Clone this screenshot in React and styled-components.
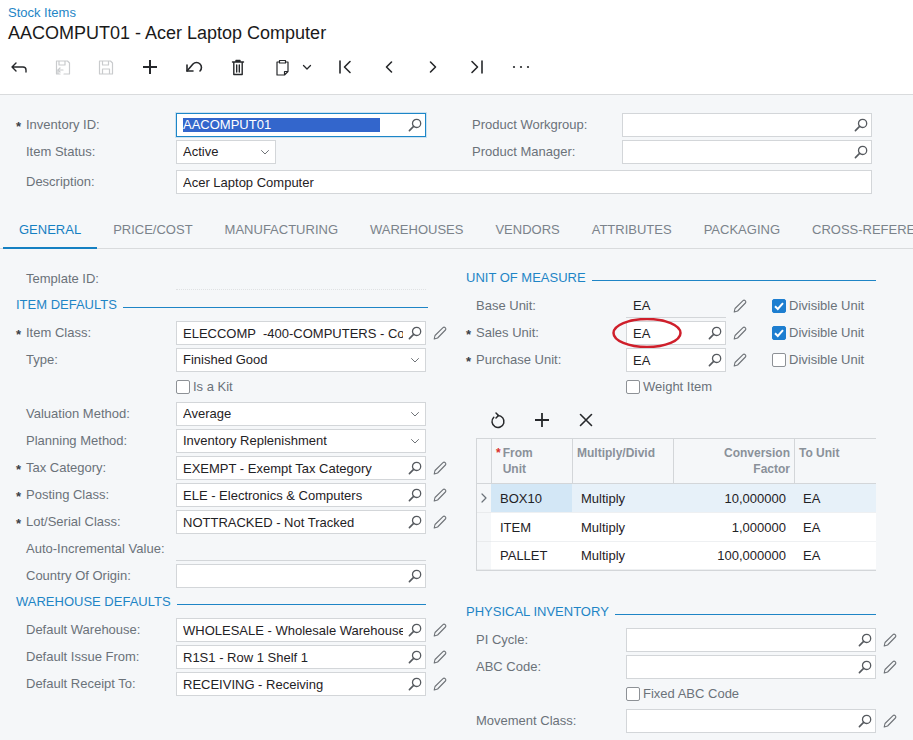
import styled, { createGlobalStyle } from "styled-components";

const GlobalStyle = createGlobalStyle`
  html, body {
    margin: 0;
    padding: 0;
    background: #f5f7f9;
  }
  * {
    box-sizing: border-box;
  }
`;

const Page = styled.div`
  width: 913px;
  height: 740px;
  overflow: hidden;
  background: #f5f7f9;
  font-family: "Liberation Sans", Arial, sans-serif;
  font-size: 13px;
  color: #1f2225;
`;

const Header = styled.header`
  height: 95px;
  padding-top: 6px;
  background: #fff;
  border-bottom: 1px solid #d9dbdd;
`;

const Crumb = styled.div`
  height: 14px;
  padding-left: 8px;
  line-height: 14px;
  font-size: 13px;
  color: #1e85c6;
`;

const Title = styled.h1`
  height: 24px;
  margin: 1px 0 0;
  padding-left: 8px;
  line-height: 24px;
  font-size: 18px;
  font-weight: 400;
  color: #1a1a1a;
`;

const Toolbar = styled.div`
  display: flex;
  gap: 8px;
  height: 36px;
  margin-top: 4px;
`;

const ToolButton = styled.div`
  display: flex;
  align-items: center;
  justify-content: ${({ $wide }) => ($wide ? "flex-start" : "center")};
  width: ${({ $wide }) => ($wide ? "55px" : "36px")};
  color: ${({ $off }) => ($off ? "#c9cbcd" : "#26282b")};
`;

const ToolSlot = styled.span`
  display: flex;
  justify-content: center;
  width: 36px;
`;

const TopForm = styled.section`
  padding: 18px 0 0 16px;
`;

const Row = styled.div`
  display: flex;
  align-items: center;
  height: 24px;
  margin-bottom: ${({ $after }) => $after ?? 3}px;
`;

const Star = styled.span`
  flex: none;
  width: 10px;
  padding-top: 3px;
  font-size: 13px;
  font-weight: 700;
  line-height: 12px;
  color: #3b4046;
`;

const Label = styled.label`
  flex: none;
  width: 150px;
  margin-top: ${({ $level }) => ($level ? "1px" : "-1px")};
  color: #6b7279;
  white-space: nowrap;
`;

const SideLabel = styled(Label)`
  margin-left: ${({ $gap }) => $gap}px;
`;

const FieldBox = styled.div`
  position: relative;
  flex: none;
  display: flex;
  align-items: center;
  width: ${({ $w }) => $w}px;
  height: 24px;
  padding: 0 3px 0 6px;
  background: #fff;
  border: 1px solid #d3d6d9;
`;

const FocusBox = styled(FieldBox)`
  border-color: #1c86c8;
  box-shadow: 0 0 0 1px rgba(28, 134, 200, 0.18);
`;

const PlainBox = styled(FieldBox)`
  background: transparent;
  border-width: 0 0 1px;
  border-style: ${({ $dotted }) => ($dotted ? "dotted" : "solid")};
  border-color: ${({ $dotted }) => ($dotted ? "#dfe1e3" : "#d3d6d9")};
  padding-left: 7px;
`;

const Value = styled.span`
  flex: 1;
  min-width: 0;
  margin-right: 5px;
  margin-top: ${({ $lift }) => ($lift ? "-2px" : "0")};
  overflow: hidden;
  white-space: pre;
  color: #1f2225;
`;

const Selected = styled.span`
  display: block;
  width: 197px;
  height: 14px;
  line-height: 14px;
  color: #fff;
  background: #3366cc;
`;

const IconSlot = styled.span`
  flex: none;
  display: flex;
  color: ${({ $soft }) => ($soft ? "#6f7378" : "#565a5f")};
`;

const EditSlot = styled(IconSlot)`
  width: 16px;
  margin-left: 6px;
`;

const Body = styled.div`
  display: flex;
  padding-top: 17px;
`;

const LeftColumn = styled.div`
  flex: none;
  width: 466px;
  padding-left: 16px;
`;

const RightColumn = styled.div`
  flex: none;
  width: 447px;
`;

const Tabs = styled.nav`
  display: flex;
  height: 39px;
  margin-top: 16px;
  padding-left: 3px;
  white-space: nowrap;
  border-bottom: 1px solid #d9dbdd;
`;

const Tab = styled.div`
  flex: none;
  height: 39px;
  padding: 0 16px;
  line-height: 40px;
  font-size: 13px;
  color: ${({ $active }) => ($active ? "#1580c2" : "#7b838b")};
  border-bottom: 2px solid ${({ $active }) => ($active ? "#1580c2" : "transparent")};
`;

const Heading = styled.div`
  display: flex;
  align-items: center;
  width: ${({ $w }) => $w}px;
  height: 22px;
  margin-top: ${({ $top }) => $top ?? -1}px;
  margin-bottom: 6px;
  font-size: 13px;
  color: #1e85c6;
  white-space: nowrap;

  &::after {
    content: "";
    flex: 1;
    height: 1px;
    margin: 6px 0 0 6px;
    background: #1e85c6;
  }
`;

const CheckRow = styled(Row)`
  padding-left: 160px;
`;

const CheckBox = styled.span`
  flex: none;
  display: flex;
  align-items: center;
  justify-content: center;
  width: 14px;
  height: 14px;
  margin-right: 3px;
  border-radius: 2px;
  background: ${({ $on }) => ($on ? "#1d7ed0" : "#fff")};
  border: 1px solid ${({ $on }) => ($on ? "#1d7ed0" : "#8d9196")};
`;

const CheckLabel = styled.span`
  margin-top: -1px;
  color: #6b7279;
  white-space: nowrap;
`;

const SideCheck = styled.span`
  display: flex;
  align-items: center;
  margin-left: 24px;
`;

const Ellipse = styled.svg`
  position: absolute;
  left: -16px;
  top: -4px;
  pointer-events: none;
`;

const GridTools = styled.div`
  display: flex;
  align-items: center;
  gap: 20px;
  height: 30px;
  margin: 6px 0 3px 10px;
  padding-left: 10px;
  color: #26282b;
`;

const GridTool = styled.span`
  display: flex;
  justify-content: center;
  width: 24px;
`;

const Grid = styled.div`
  display: grid;
  grid-template-columns: 14px 81px 101px 121px 82px;
  grid-template-rows: 45px 29px 29px 28px;
  width: 400px;
  margin-left: 10px;
  border-top: 1px solid #d3d6d9;
  border-left: 1px solid #d3d6d9;
  border-bottom: 1px solid #d3d6d9;
`;

const HeadCell = styled.div`
  padding: 6px 4px 0;
  font-size: 12px;
  font-weight: 700;
  line-height: 16px;
  color: #8a9199;
  white-space: ${({ $wrap }) => ($wrap ? "normal" : "nowrap")};
  text-align: ${({ $right }) => ($right ? "right" : "left")};
  border-left: ${({ $first }) => ($first ? "none" : "1px solid #d3d6d9")};
  border-bottom: 1px solid #d3d6d9;
`;

const ReqMark = styled.span`
  color: #d9302c;
  margin-right: 2px;
`;

const HeadText = styled.span`
  display: inline-block;
  vertical-align: top;
`;

const MarkCell = styled.div`
  display: flex;
  align-items: center;
  justify-content: center;
  color: #6b7279;
  background: #f5f7f9;
  border-bottom: 1px solid #e9ebed;
`;

const Cell = styled.div`
  display: flex;
  align-items: center;
  justify-content: ${({ $right }) => ($right ? "flex-end" : "flex-start")};
  padding: ${({ $right }) => ($right ? "0 8px 0 0" : "0 0 0 9px")};
  color: #1f2225;
  background: ${({ $tone }) =>
    $tone === "active" ? "#d3e7f6" : $tone === "row" ? "#e7f1f9" : "#fff"};
  border-bottom: 1px solid #eef0f2;
`;

function Line({ w = 20, h = 20, sw = 1.4, children }) {
  return (
    <svg
      width={w}
      height={h}
      viewBox={`0 0 ${w} ${h}`}
      fill="none"
      stroke="currentColor"
      strokeWidth={sw}
      strokeLinecap="round"
      strokeLinejoin="round"
    >
      {children}
    </svg>
  );
}

const Search = () => (
  <IconSlot>
    <Line w={14} h={14} sw={1.3}>
      <circle cx="8.6" cy="5.4" r="4.1" />
      <path d="M5.6 8.4L1.4 12.6" strokeWidth="1.6" />
    </Line>
  </IconSlot>
);

const Chevron = () => (
  <IconSlot $soft>
    <Line w={14} h={14} sw={1}>
      <path d="M3.5 5.5L7 9l3.5-3.5" />
    </Line>
  </IconSlot>
);

const Edit = () => (
  <EditSlot $soft>
    <Line w={16} h={16} sw={1.1}>
      <path d="M2.2 14l.8-3.5L11 2.6a1.5 1.5 0 0 1 2.1 0l.3.3a1.5 1.5 0 0 1 0 2.1L5.6 13z" />
    </Line>
  </EditSlot>
);

const Check = ({ on }) => (
  <CheckBox $on={on}>
    {on && (
      <svg width="12" height="12" viewBox="0 0 12 12" fill="none" stroke="#fff" strokeWidth="2">
        <path d="M2 6.2l2.8 2.8L10 3.2" />
      </svg>
    )}
  </CheckBox>
);

function Field({ label, req, value, kind = "search", w = 250, edit, after }) {
  const Box = kind === "plain" || kind === "dotted" ? PlainBox : FieldBox;
  return (
    <Row $after={after}>
      <Star>{req ? "*" : ""}</Star>
      <Label $level={kind === "dotted"}>{label}</Label>
      <Box $w={w} $dotted={kind === "dotted"}>
        <Value $lift={kind === "select"}>{value}</Value>
        {kind === "search" && <Search />}
        {kind === "select" && <Chevron />}
      </Box>
      {edit && <Edit />}
    </Row>
  );
}

const tabs = [
  "GENERAL",
  "PRICE/COST",
  "MANUFACTURING",
  "WAREHOUSES",
  "VENDORS",
  "ATTRIBUTES",
  "PACKAGING",
  "CROSS-REFERENCE",
];

const unitRows = [
  { from: "BOX10", factor: "10,000000" },
  { from: "ITEM", factor: "1,000000" },
  { from: "PALLET", factor: "100,000000" },
];

export default function App() {
  return (
    <Page>
      <GlobalStyle />
      <Header>
        <Crumb>Stock Items</Crumb>
        <Title>AACOMPUT01 - Acer Laptop Computer</Title>
        <Toolbar>
          <ToolButton>
            <Line>
              <path d="M8 6l-4 4 4 4M4 10h11a3 3 0 0 1 3 3v2" />
            </Line>
          </ToolButton>
          <ToolButton $off>
            <Line sw={1.2}>
              <path d="M8 17H4.5V4h11l2 2v11H12M7 4v4h6V4M6 17v-4h5" />
              <path d="M8 11l-2 2 2 2" />
            </Line>
          </ToolButton>
          <ToolButton $off>
            <Line sw={1.2}>
              <path d="M3.5 4h11l2 2v11h-13zM6.5 4v4h6V4M6.5 17v-5h7v5" />
            </Line>
          </ToolButton>
          <ToolButton>
            <Line sw={2}>
              <path d="M3 10h14M10 3v14" strokeLinecap="butt" />
            </Line>
          </ToolButton>
          <ToolButton>
            <Line sw={1.6}>
              <path d="M3 8v6h6" />
              <path d="M3 14l6-7a4.8 4.8 0 0 1 7 7" />
            </Line>
          </ToolButton>
          <ToolButton>
            <Line sw={1.4}>
              <path d="M4.5 5h11M8 5V3.5h4V5M5.8 5v12.5h8.400V5M8.700 8v7M11.300 8v7" />
            </Line>
          </ToolButton>
          <ToolButton $wide>
            <ToolSlot>
              <Line sw={1.2}>
                <path d="M7.500 5H5v13h7.500L16 14.500V5h-2.500M7.500 3.500h6V6h-6zM12.500 18v-3.500H16" />
              </Line>
            </ToolSlot>
            <Line w={14} h={14} sw={1.3}>
              <path d="M3.500 5.500L7 9l3.500-3.500" />
            </Line>
          </ToolButton>
          <ToolButton>
            <Line sw={1.6}>
              <path d="M5 4v12M15 4.500L9.500 10l5.500 5.500" />
            </Line>
          </ToolButton>
          <ToolButton>
            <Line sw={1.6}>
              <path d="M12.500 5L7.500 10l5 5" />
            </Line>
          </ToolButton>
          <ToolButton>
            <Line sw={1.6}>
              <path d="M7.500 5l5 5-5 5" />
            </Line>
          </ToolButton>
          <ToolButton>
            <Line sw={1.6}>
              <path d="M15 4v12M5 4.500L10.500 10 5 15.500" />
            </Line>
          </ToolButton>
          <ToolButton>
            <svg width="20" height="20" viewBox="0 0 20 20" fill="currentColor">
              <circle cx="3" cy="10" r="1.100" />
              <circle cx="10" cy="10" r="1.100" />
              <circle cx="17" cy="10" r="1.100" />
            </svg>
          </ToolButton>
        </Toolbar>
      </Header>

      <TopForm>
        <Row>
          <Star>*</Star>
          <Label>Inventory ID:</Label>
          <FocusBox $w={250}>
            <Value>
              <Selected>AACOMPUT01</Selected>
            </Value>
            <Search />
          </FocusBox>
          <SideLabel $gap={46}>Product Workgroup:</SideLabel>
          <FieldBox $w={250}>
            <Value />
            <Search />
          </FieldBox>
        </Row>
        <Row $after={6}>
          <Star />
          <Label>Item Status:</Label>
          <FieldBox $w={100}>
            <Value $lift>Active</Value>
            <Chevron />
          </FieldBox>
          <SideLabel $gap={196}>Product Manager:</SideLabel>
          <FieldBox $w={250}>
            <Value />
            <Search />
          </FieldBox>
        </Row>
        <Row>
          <Star />
          <Label>Description:</Label>
          <FieldBox $w={696}>
            <Value>Acer Laptop Computer</Value>
          </FieldBox>
        </Row>
      </TopForm>

      <Tabs>
        {tabs.map((tab, i) => (
          <Tab key={tab} $active={i === 0}>
            {tab}
          </Tab>
        ))}
      </Tabs>

      <Body>
        <LeftColumn>
          <Field label="Template ID:" kind="dotted" after={4} />
          <Heading $w={412}>ITEM DEFAULTS</Heading>
          <Field label="Item Class:" req value="ELECCOMP  -400-COMPUTERS - Computers" edit />
          <Field label="Type:" kind="select" value="Finished Good" />
          <CheckRow>
            <Check />
            <CheckLabel>Is a Kit</CheckLabel>
          </CheckRow>
          <Field label="Valuation Method:" kind="select" value="Average" />
          <Field label="Planning Method:" kind="select" value="Inventory Replenishment" />
          <Field label="Tax Category:" req value="EXEMPT - Exempt Tax Category" edit />
          <Field label="Posting Class:" req value="ELE - Electronics & Computers" edit />
          <Field label="Lot/Serial Class:" req value="NOTTRACKED - Not Tracked" edit />
          <Field label="Auto-Incremental Value:" kind="plain" />
          <Field label="Country Of Origin:" />
          <Heading $w={410}>WAREHOUSE DEFAULTS</Heading>
          <Field label="Default Warehouse:" value="WHOLESALE - Wholesale Warehouse" edit />
          <Field label="Default Issue From:" value="R1S1 - Row 1 Shelf 1" edit />
          <Field label="Default Receipt To:" value="RECEIVING - Receiving" edit />
        </LeftColumn>

        <RightColumn>
          <Heading $w={410} $top={0}>
            UNIT OF MEASURE
          </Heading>
          <Row>
            <Star />
            <Label>Base Unit:</Label>
            <PlainBox $w={100}>
              <Value>EA</Value>
            </PlainBox>
            <Edit />
            <SideCheck>
              <Check on />
              <CheckLabel>Divisible Unit</CheckLabel>
            </SideCheck>
          </Row>
          <Row>
            <Star>*</Star>
            <Label>Sales Unit:</Label>
            <FieldBox $w={100}>
              <Value>EA</Value>
              <Search />
              <Ellipse width="72" height="32" viewBox="0 0 72 32" fill="none">
                <ellipse cx="36" cy="15" rx="33.5" ry="14" stroke="#cf1f2b" strokeWidth="2.5" />
              </Ellipse>
            </FieldBox>
            <Edit />
            <SideCheck>
              <Check on />
              <CheckLabel>Divisible Unit</CheckLabel>
            </SideCheck>
          </Row>
          <Row>
            <Star>*</Star>
            <Label>Purchase Unit:</Label>
            <FieldBox $w={100}>
              <Value>EA</Value>
              <Search />
            </FieldBox>
            <Edit />
            <SideCheck>
              <Check />
              <CheckLabel>Divisible Unit</CheckLabel>
            </SideCheck>
          </Row>
          <CheckRow>
            <Check />
            <CheckLabel>Weight Item</CheckLabel>
          </CheckRow>

          <GridTools>
            <GridTool>
              <Line sw={1.5}>
                <path d="M8 3l2.5 2.5L8 8" />
                <path d="M10 5.500a6 6 0 1 1-4.200 1.700" />
              </Line>
            </GridTool>
            <GridTool>
              <Line sw={1.8}>
                <path d="M3 10h14M10 3v14" strokeLinecap="butt" />
              </Line>
            </GridTool>
            <GridTool>
              <Line sw={1.6}>
                <path d="M4.5 4.500l11 11M15.500 4.500l-11 11" />
              </Line>
            </GridTool>
          </GridTools>

          <Grid>
            <HeadCell $first />
            <HeadCell $wrap>
              <ReqMark>*</ReqMark>
              <HeadText>
                From
                <br />
                Unit
              </HeadText>
            </HeadCell>
            <HeadCell>Multiply/Divid</HeadCell>
            <HeadCell $right $wrap>
              Conversion
              <br />
              Factor
            </HeadCell>
            <HeadCell>To Unit</HeadCell>
            {unitRows.map((row, i) => {
              const tone = i === 0 ? "row" : undefined;
              return [
                <MarkCell key={`${row.from}-mark`}>
                  {i === 0 && (
                    <Line w={10} h={14} sw={1.2}>
                      <path d="M3 3l4 4-4 4" />
                    </Line>
                  )}
                </MarkCell>,
                <Cell key={`${row.from}-from`} $tone={i === 0 ? "active" : undefined}>
                  {row.from}
                </Cell>,
                <Cell key={`${row.from}-op`} $tone={tone}>
                  Multiply
                </Cell>,
                <Cell key={`${row.from}-factor`} $tone={tone} $right>
                  {row.factor}
                </Cell>,
                <Cell key={`${row.from}-to`} $tone={tone}>
                  EA
                </Cell>,
              ];
            })}
          </Grid>

          <Heading $w={410} $top={29}>
            PHYSICAL INVENTORY
          </Heading>
          <Field label="PI Cycle:" edit />
          <Field label="ABC Code:" edit />
          <CheckRow>
            <Check />
            <CheckLabel>Fixed ABC Code</CheckLabel>
          </CheckRow>
          <Field label="Movement Class:" edit />
        </RightColumn>
      </Body>
    </Page>
  );
}
